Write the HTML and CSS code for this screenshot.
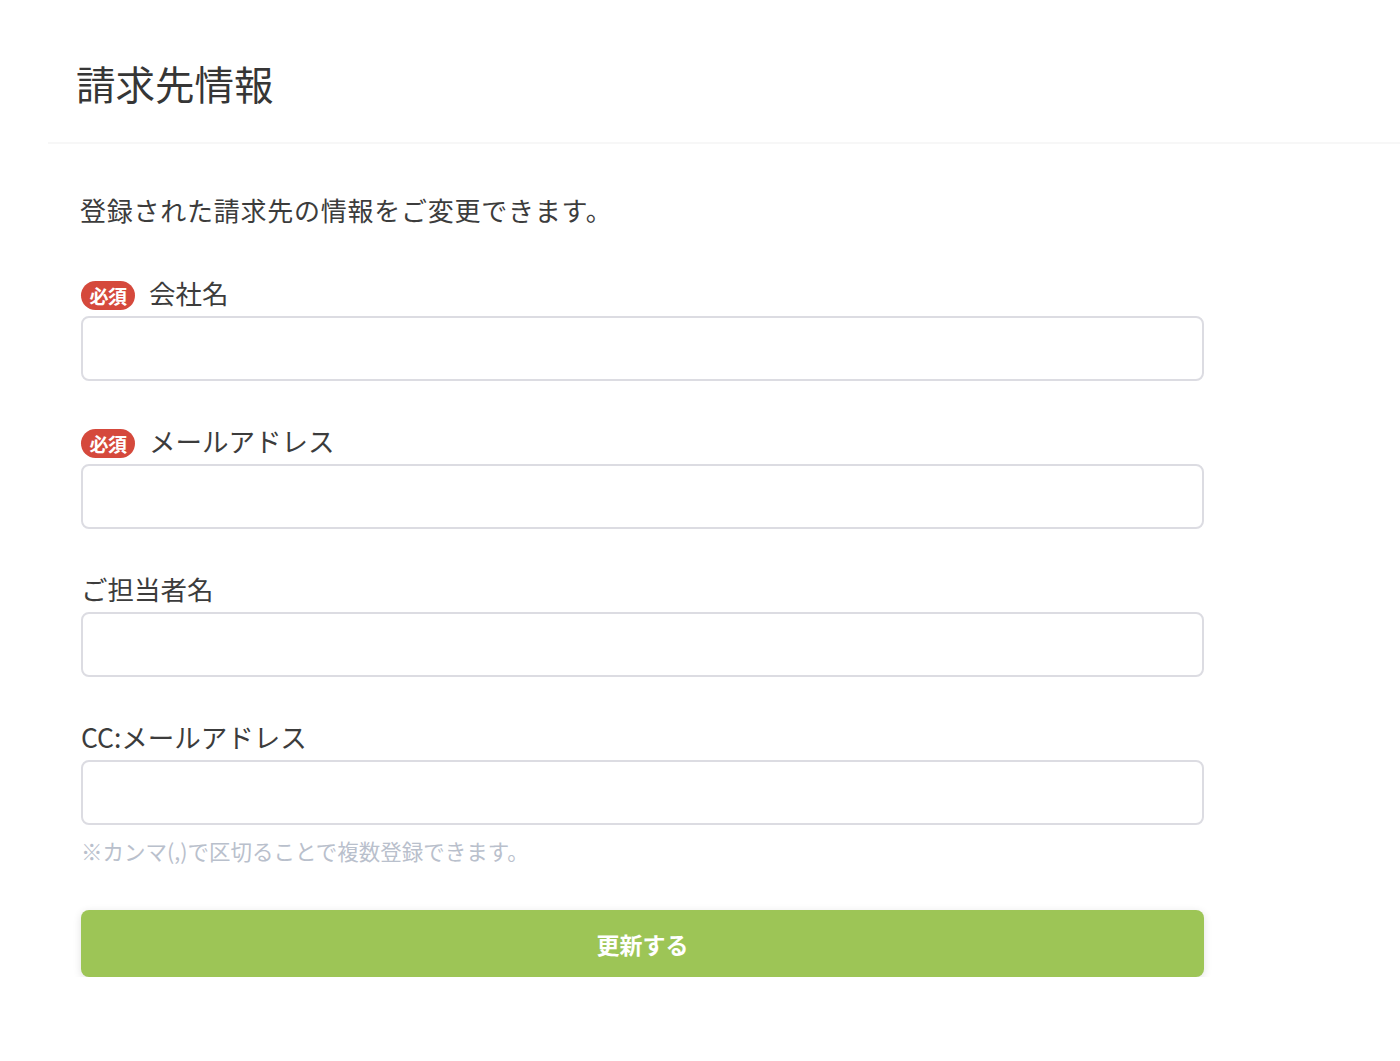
FILE: index.html
```html
<!DOCTYPE html>
<html lang="ja">
<head>
<meta charset="utf-8">
<title>請求先情報</title>
<link rel="stylesheet" href="styles.css">
</head>
<body>
<div class="page">
  <header class="page-header">
    <h1 class="page-title">請求先情報</h1>
  </header>
  <main class="content">
    <p class="lead">登録された請求先の情報をご変更できます。</p>
    <form class="form">
      <div class="field">
        <label class="label"><span class="badge">必須</span>会社名</label>
        <input class="input" type="text">
      </div>
      <div class="field">
        <label class="label"><span class="badge">必須</span>メールアドレス</label>
        <input class="input" type="text">
      </div>
      <div class="field">
        <label class="label">ご担当者名</label>
        <input class="input" type="text">
      </div>
      <div class="field field-last">
        <label class="label">CC:メールアドレス</label>
        <input class="input" type="text">
        <p class="hint">※カンマ(,)で区切ることで複数登録できます。</p>
      </div>
      <button class="submit" type="button">更新する</button>
    </form>
  </main>
</div>
</body>
</html>
```
FILE: styles.css
```css
html, body {
  margin: 0;
  padding: 0;
  background: #ffffff;
}
body {
  font-family: "Noto Sans CJK JP", "Noto Sans", sans-serif;
  color: #3c3c3c;
}
.page-header {
  margin-left: 48px;
  padding: 59px 0 35px 28px;
  border-bottom: 2px solid #f7f7f7;
}
.page-title {
  margin: 0;
  font-size: 39.5px;
  line-height: 48px;
  font-weight: 400;
  color: #363636;
}
.content {
  padding: 0 196px 0 80px;
}
.lead {
  margin: 48px 0 0;
  font-size: 26px;
  line-height: 36px;
  letter-spacing: 0.75px;
  color: #3c3c3c;
}
.form {
  margin-top: 48px;
  display: flex;
  flex-direction: column;
  padding-left: 1px;
}
.field {
  display: flex;
  flex-direction: column;
  margin-bottom: 43px;
}
.field-last {
  margin-bottom: 0;
}
.label {
  display: flex;
  align-items: center;
  height: 34px;
  margin-bottom: 6px;
  font-size: 26.5px;
  line-height: 34px;
  color: #3c3c3c;
}
.badge {
  display: inline-flex;
  align-items: center;
  justify-content: center;
  height: 29px;
  width: 54px;
  margin-right: 14px;
  margin-top: 4px;
  border-radius: 15px;
  background: #d5493c;
  color: #ffffff;
  font-size: 19px;
  font-weight: 700;
  line-height: 1;
  letter-spacing: -0.5px;
}
.input {
  box-sizing: border-box;
  height: 65px;
  width: 100%;
  margin: 0;
  border: 2px solid #dcdce2;
  border-radius: 8px;
  background: #ffffff;
  font: inherit;
}
.hint {
  margin: 11px 0 0;
  font-size: 21.5px;
  line-height: 30px;
  color: #b9c0cc;
}
.submit {
  margin-top: 44px;
  height: 67px;
  width: 100%;
  border: none;
  border-radius: 8px;
  background: #9dc556;
  color: #ffffff;
  font-family: inherit;
  font-size: 23px;
  font-weight: 700;
  box-shadow: 0 2px 8px rgba(0, 0, 0, 0.12);
}
```
